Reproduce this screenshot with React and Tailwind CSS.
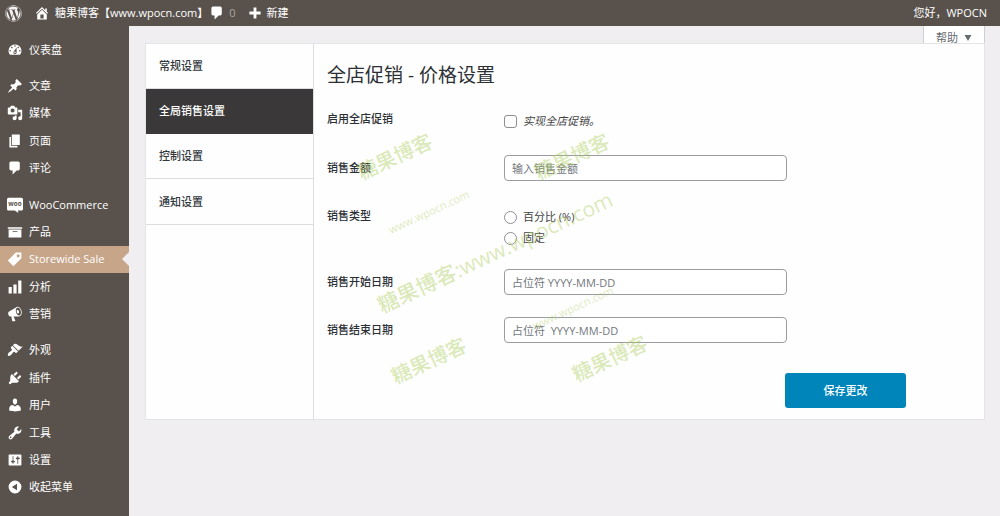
import { useState } from "react";
import { FaWordpress } from "react-icons/fa";

const icons = {
  home: "M16 8.5l1.53 1.53-1.06 1.06L10 4.6l-6.47 6.49-1.06-1.06L10 2.5l4 4v-2h2v4zm-6-2.46l6 5.99V18H4v-5.97zM12 17v-5H8v5h4z",
  plus: "M18 8v4h-6v6H8v-6H2V8h6V2h4v6h6z",
  dashboard:
    "M3.76 16h12.48A7.998 7.998 0 0 0 10 3a7.998 7.998 0 0 0-6.24 13zM10 4c.55 0 1 .45 1 1s-.45 1-1 1-1-.45-1-1 .45-1 1-1zM6 6c.55 0 1 .45 1 1s-.45 1-1 1-1-.45-1-1 .45-1 1-1zm8 0c.55 0 1 .45 1 1s-.45 1-1 1-1-.45-1-1 .45-1 1-1zm-5.37 5.55L12 7v6c0 1.1-.9 2-2 2s-2-.9-2-2c0-.57.24-1.08.63-1.45zM4 10c.55 0 1 .45 1 1s-.45 1-1 1-1-.45-1-1 .45-1 1-1zm12 0c.55 0 1 .45 1 1s-.45 1-1 1-1-.45-1-1 .45-1 1-1zm-5 3c0-.55-.45-1-1-1s-1 .45-1 1 .45 1 1 1 1-.45 1-1z",
  post: "M10.44 3.02l1.82-1.82 6.36 6.35-1.83 1.82c-1.05-.68-2.48-.57-3.41.36l-.75.75c-.92.93-1.04 2.35-.35 3.41l-1.83 1.82-2.41-2.41-2.8 2.79c-.42.42-3.38 2.71-3.8 2.29s1.86-3.39 2.28-3.81l2.79-2.79L4.1 9.36l1.83-1.82c1.05.69 2.48.57 3.4-.36l.75-.75c.93-.92 1.05-2.35.36-3.41z",
  media:
    "M13 11V4c0-.55-.45-1-1-1h-1.67L9 1H5L3.67 3H2c-.55 0-1 .45-1 1v7c0 .55.45 1 1 1h10c.55 0 1-.45 1-1zM7 4.5c1.38 0 2.5 1.12 2.5 2.5S8.38 9.5 7 9.5 4.5 8.38 4.5 7 5.62 4.5 7 4.5zM14 6h5v10.5c0 1.38-1.12 2.5-2.5 2.5S14 17.88 14 16.5s1.12-2.5 2.5-2.5c.17 0 .34.02.5.05V9h-3V6zm-4 8.05V13h2v3.5c0 1.38-1.12 2.5-2.5 2.5S7 17.88 7 16.5 8.12 14 9.5 14c.17 0 .34.02.5.05z",
  page: "M6 15V2h10v13H6zm-1 1h8v2H3V5h2v11z",
  comments: "M5 2h9c1.1 0 2 .9 2 2v7c0 1.1-.9 2-2 2h-2l-5 5v-5H5c-1.1 0-2-.9-2-2V4c0-1.1.9-2 2-2z",
  archive: "M19 4v2H1V4h18zM2 7h16v10H2V7zm11 3V9H7v1h6z",
  tag: "M11 2h7v7L8 19l-7-7zm3 6c1.1 0 2-.9 2-2s-.9-2-2-2-2 .9-2 2 .9 2 2 2z",
  chart: "M18 18V2h-4v16h4zm-6 0V7H8v11h4zm-6 0v-8H2v8h4z",
  megaphone:
    "M18.15 5.94c.46 1.62.38 3.22-.02 4.48-.42 1.28-1.26 2.18-2.3 2.48-.16.06-.26.06-.4.06-.06.02-.12.02-.18.02-.06.02-.14.02-.22.02h-6.8l2.22 5.5c.02.14-.06.26-.14.34-.08.1-.24.16-.34.16H6.95c-.1 0-.26-.06-.34-.16-.08-.08-.16-.2-.14-.34l-1-5.5H4.25l-.02-.02c-.5.06-1.08-.18-1.54-.62s-.88-1.08-1.06-1.88c-.24-.8-.2-1.56-.02-2.2.18-.62.58-1.08 1.06-1.3l.02-.02 9-5.4c.1-.06.18-.1.24-.16.06-.04.14-.08.24-.12.16-.08.28-.12.5-.18 1.04-.3 2.24.1 3.22.98s1.84 2.24 2.26 3.86zm-2.58 5.98h-.02c.4-.1.74-.34 1.04-.7.58-.7.86-1.76.86-3.04 0-.64-.1-1.3-.28-1.98-.34-1.36-1.02-2.5-1.78-3.24s-1.68-1.1-2.46-.88c-.82.22-1.4.96-1.7 2-.32 1.04-.28 2.36.06 3.72.38 1.36 1 2.5 1.8 3.24.78.74 1.62 1.1 2.48.88zm-2.54-7.08c.22-.04.42-.02.62.04.38.16.76.48 1.02 1s.42 1.2.42 1.78c0 .3-.04.56-.12.8-.18.48-.44.84-.86.94-.34.1-.8-.06-1.14-.4s-.64-.86-.78-1.5c-.18-.62-.12-1.24.02-1.72s.48-.84.82-.94z",
  appearance:
    "M14.48 11.06L7.41 3.99l1.5-1.5c.5-.56 2.3-.47 3.51.32 1.21.8 1.43 1.28 2.91 2.1 1.18.64 2.45 1.26 4.45.85zm-.71.71L6.7 4.7 4.93 6.47c-.39.39-.39 1.02 0 1.41l1.06 1.06c.39.39.39 1.03 0 1.42-.6.6-1.43 1.11-2.21 1.69-.35.26-.7.53-1.01.84C1.43 14.23.4 16.08 1.4 17.07c.99 1 2.84-.03 4.18-1.36.31-.31.58-.66.85-1.02.57-.78 1.08-1.61 1.69-2.21.39-.39 1.02-.39 1.41 0l1.06 1.06c.39.39 1.02.39 1.41 0z",
  plugins:
    "M13.11 4.36L9.87 7.6 8 5.73l3.24-3.24c.35-.34 1.05-.2 1.56.32.52.51.66 1.21.31 1.55zm-8 1.77l.91-1.12 9.01 9.01-1.19.84c-.71.71-2.63 1.16-3.82 1.16H6.14L4.9 17.26c-.59.59-1.54.59-2.12 0-.59-.58-.59-1.53 0-2.12l1.24-1.24v-3.88c0-1.13.4-3.19 1.09-3.89zm7.26 3.97l3.24-3.24c.34-.35 1.04-.21 1.55.31.52.51.66 1.21.31 1.55l-3.24 3.25z",
  users:
    "M10 9.25c-2.27 0-2.73-3.44-2.73-3.44C7 4.02 7.82 2 9.97 2c2.16 0 2.98 2.02 2.71 3.81 0 0-.41 3.44-2.68 3.44zm0 2.57L12.72 10c2.39 0 4.52 2.33 4.52 4.53v2.49s-3.65 1.13-7.24 1.13c-3.65 0-7.24-1.13-7.24-1.13v-2.49c0-2.25 1.94-4.48 4.47-4.48z",
  tools:
    "M16.68 9.77c-1.34 1.34-3.3 1.67-4.95.99l-5.41 6.52c-.99.99-2.59.99-3.58 0s-.99-2.59 0-3.57l6.52-5.42c-.68-1.65-.35-3.61.99-4.95 1.28-1.28 3.12-1.62 4.72-1.06l-2.89 2.89 2.82 2.82 2.86-2.87c.53 1.58.18 3.39-1.08 4.65zM3.81 16.21c.4.39 1.04.39 1.43 0 .4-.4.4-1.04 0-1.43-.39-.4-1.03-.4-1.43 0-.39.39-.39 1.03 0 1.43z",
  settings:
    "M18 16V4c0-.55-.45-1-1-1H3c-.55 0-1 .45-1 1v12c0 .55.45 1 1 1h14c.55 0 1-.45 1-1zM8 11h1c.55 0 1 .45 1 1s-.45 1-1 1H8v1.5c0 .28-.22.5-.5.5s-.5-.22-.5-.5V13H6c-.55 0-1-.45-1-1s.45-1 1-1h1V5.5c0-.28.22-.5.5-.5s.5.22.5.5V11zm5-2h-1c-.55 0-1-.45-1-1s.45-1 1-1h1V5.5c0-.28.22-.5.5-.5s.5.22.5.5V7h1c.55 0 1 .45 1 1s-.45 1-1 1h-1v5.5c0 .28-.22.5-.5.5s-.5-.22-.5-.5V9z",
  collapse: "M10 2a8 8 0 1 0 0 16 8 8 0 0 0 0-16zm2.5 12L6 10l6.5-4z",
};

const menuGroups = [
  [{ icon: "dashboard", label: "仪表盘" }],
  [
    { icon: "post", label: "文章" },
    { icon: "media", label: "媒体" },
    { icon: "page", label: "页面" },
    { icon: "comments", label: "评论" },
  ],
  [
    { icon: "woo", label: "WooCommerce" },
    { icon: "archive", label: "产品" },
    { icon: "tag", label: "Storewide Sale", active: true },
    { icon: "chart", label: "分析" },
    { icon: "megaphone", label: "营销" },
  ],
  [
    { icon: "appearance", label: "外观" },
    { icon: "plugins", label: "插件" },
    { icon: "users", label: "用户" },
    { icon: "tools", label: "工具" },
    { icon: "settings", label: "设置" },
    { icon: "collapse", label: "收起菜单" },
  ],
];

const tabs = ["常规设置", "全局销售设置", "控制设置", "通知设置"];

const watermarks = [
  { text: "糖果博客", className: "left-[249px] top-[113px] text-[20px] font-medium" },
  { text: "糖果博客", className: "left-[426px] top-[113px] text-[20px] font-medium" },
  { text: "www.wpocn.com", className: "left-[283px] top-[168px] text-[11px]" },
  { text: "糖果博客:www.wpocn.com", className: "left-[349px] top-[208px] text-[21px] font-medium" },
  { text: "www.wpocn.com", className: "left-[427px] top-[264px] text-[11px]" },
  { text: "糖果博客", className: "left-[283px] top-[317px] text-[20px] font-medium" },
  { text: "糖果博客", className: "left-[464px] top-[315px] text-[20px] font-medium" },
];

function Icon({ name, className = "size-4" }) {
  if (name === "woo") {
    return (
      <svg viewBox="0 0 20 20" className={className} aria-hidden="true">
        <path
          fill="currentColor"
          d="M2 1h16c1.1 0 2 .9 2 2v12c0 1.1-.9 2-2 2h-4.500l.8 3-4.600-3H2c-1.100 0-2-.9-2-2V3c0-1.100.9-2 2-2z"
        />
        <text x="10" y="11.5" textAnchor="middle" fontSize="8" fontWeight="700" fill="#59524c">
          woo
        </text>
      </svg>
    );
  }
  return (
    <svg viewBox="0 0 20 20" fill="currentColor" fillRule="evenodd" className={className} aria-hidden="true">
      <path d={icons[name]} />
    </svg>
  );
}

function AdminBar() {
  return (
    <header className="flex h-[26px] items-center bg-[#59524c] pl-[5px] pr-[13px] text-white">
      <a href="#wp" aria-label="WordPress">
        <FaWordpress className="size-[17px] text-[#f3f1f1]" />
      </a>
      <a href="#site" className="ml-3 flex items-center gap-[5px]">
        <Icon name="home" />
        糖果博客【www.wpocn.com】
      </a>
      <a href="#comments" className="ml-px flex items-center gap-1">
        <Icon name="comments" />
        <span className="text-[#a9a5a1]">0</span>
      </a>
      <a href="#new" className="ml-3 flex items-center gap-[5px]">
        <Icon name="plus" className="size-3.5" />
        新建
      </a>
      <a href="#profile" className="ml-auto">
        您好，WPOCN
      </a>
    </header>
  );
}

function Sidebar() {
  return (
    <nav className="flex w-[129px] shrink-0 flex-col bg-[#59524c] pt-2.5 pb-[15px] text-white">
      {menuGroups.map((group, i) =>
        group.map((item, j) => (
          <a
            key={item.label}
            href="#menu"
            className={`relative flex min-h-[27px] max-h-7 flex-1 items-center gap-1.5 pl-[7px] ${
              item.active ? "bg-[#c7a589]" : ""
            } ${i > 0 && j === 0 ? "mt-[9px]" : ""}`}
          >
            <Icon name={item.icon} />
            {item.label}
            {item.active && (
              <span className="absolute right-0 top-1/2 -translate-y-1/2 border-y-[7px] border-r-[7px] border-y-transparent border-r-[#f0eef0]" />
            )}
          </a>
        ))
      )}
    </nav>
  );
}

const inputClass =
  "h-[26px] w-full max-w-[283px] rounded-[4px] border border-[#9a9ca2] bg-white px-[7px] text-[#32373c] outline-none placeholder:text-[#72777c] placeholder:opacity-100";

const boxClass = "size-[13px] shrink-0 appearance-none border border-[#8c8f94] bg-white checked:bg-[#0085ba]";

export default function App() {
  const [tab, setTab] = useState("全局销售设置");
  const [enabled, setEnabled] = useState(false);
  const [amount, setAmount] = useState("");
  const [type, setType] = useState("");
  const [start, setStart] = useState("");
  const [end, setEnd] = useState("");

  return (
    <div
      lang="zh-CN"
      className="flex min-h-screen flex-col bg-[#f0eef0] font-['Open_Sans','Noto_Sans_CJK_SC',sans-serif] text-[11px] leading-4 text-[#2c3035]"
    >
      <AdminBar />
      <div className="flex flex-1">
        <Sidebar />
        <main className="flex min-w-0 flex-1 flex-col pl-4 pr-[15px]">
          <button className="flex h-[17px] items-center gap-1.5 self-end border-x border-[#ccd0d4] bg-white px-3 pt-1.5 text-[#666b70]">
            帮助
            <svg viewBox="0 0 8 7" className="h-[6px] w-2" fill="currentColor" aria-hidden="true">
              <path d="M0 0h8L4 7z" />
            </svg>
          </button>

          <section className="relative flex border border-[#e4e3e6] bg-[#fefefe]">
            <div className="w-[168px] shrink-0 border-r border-[#dcdce2]">
              {tabs.map((t) => (
                <button
                  key={t}
                  onClick={() => setTab(t)}
                  className={`block h-[45px] w-full border-b px-[13px] text-left font-medium last:h-[46px] ${
                    tab === t ? "border-[#3b3839] bg-[#3b3839] text-white" : "border-[#dcdce2] text-[#32373c]"
                  }`}
                >
                  {t}
                </button>
              ))}
            </div>

            <form onSubmit={(e) => e.preventDefault()} className="min-w-0 flex-1 pb-[11px] pl-[13px] pt-[17px]">
              <h1 className="text-[19px] leading-7">全店促销 - 价格设置</h1>

              <div className="mt-[21px] grid grid-cols-[177px_1fr] gap-y-[22px] pr-4">
                <label htmlFor="enable" className="pt-px font-medium">
                  启用全店促销
                </label>
                <label className="flex h-[23px] items-center gap-1.5 pb-px italic text-[#444]">
                  <input
                    id="enable"
                    type="checkbox"
                    checked={enabled}
                    onChange={(e) => setEnabled(e.target.checked)}
                    className={`${boxClass} rounded-[3px]`}
                  />
                  实现全店促销。
                </label>

                <label htmlFor="amount" className="pt-[5px] font-medium">
                  销售金额
                </label>
                <input
                  id="amount"
                  type="text"
                  placeholder="输入销售金额"
                  value={amount}
                  onChange={(e) => setAmount(e.target.value)}
                  className={inputClass}
                />

                <span id="type-label" className="pt-[5px] font-medium">
                  销售类型
                </span>
                <div role="radiogroup" aria-labelledby="type-label" className="flex flex-col gap-[5px] pb-px pt-1.5 text-[#444]">
                  {["百分比 (%)", "固定"].map((t) => (
                    <label key={t} className="flex items-center gap-1.5">
                      <input
                        type="radio"
                        name="type"
                        checked={type === t}
                        onChange={() => setType(t)}
                        className={`${boxClass} rounded-full`}
                      />
                      {t}
                    </label>
                  ))}
                </div>

                <label htmlFor="start" className="pt-[5px] font-medium">
                  销售开始日期
                </label>
                <input
                  id="start"
                  type="text"
                  placeholder="占位符 YYYY-MM-DD"
                  value={start}
                  onChange={(e) => setStart(e.target.value)}
                  className={inputClass}
                />

                <label htmlFor="end" className="pt-[5px] font-medium">
                  销售结束日期
                </label>
                <input
                  id="end"
                  type="text"
                  placeholder="占位符  YYYY-MM-DD"
                  value={end}
                  onChange={(e) => setEnd(e.target.value)}
                  className={inputClass}
                />
              </div>

              <div className="mt-[30px] flex justify-end pr-[78px]">
                <button type="submit" className="h-[35px] w-[121px] rounded-[3px] bg-[#0085ba] font-medium text-white">
                  保存更改
                </button>
              </div>
            </form>

            {watermarks.map((w, i) => (
              <span
                key={i}
                className={`pointer-events-none absolute -translate-x-1/2 -translate-y-1/2 rotate-[-25deg] whitespace-nowrap text-[#b0d064]/45 ${w.className}`}
              >
                {w.text}
              </span>
            ))}
          </section>
        </main>
      </div>
    </div>
  );
}
